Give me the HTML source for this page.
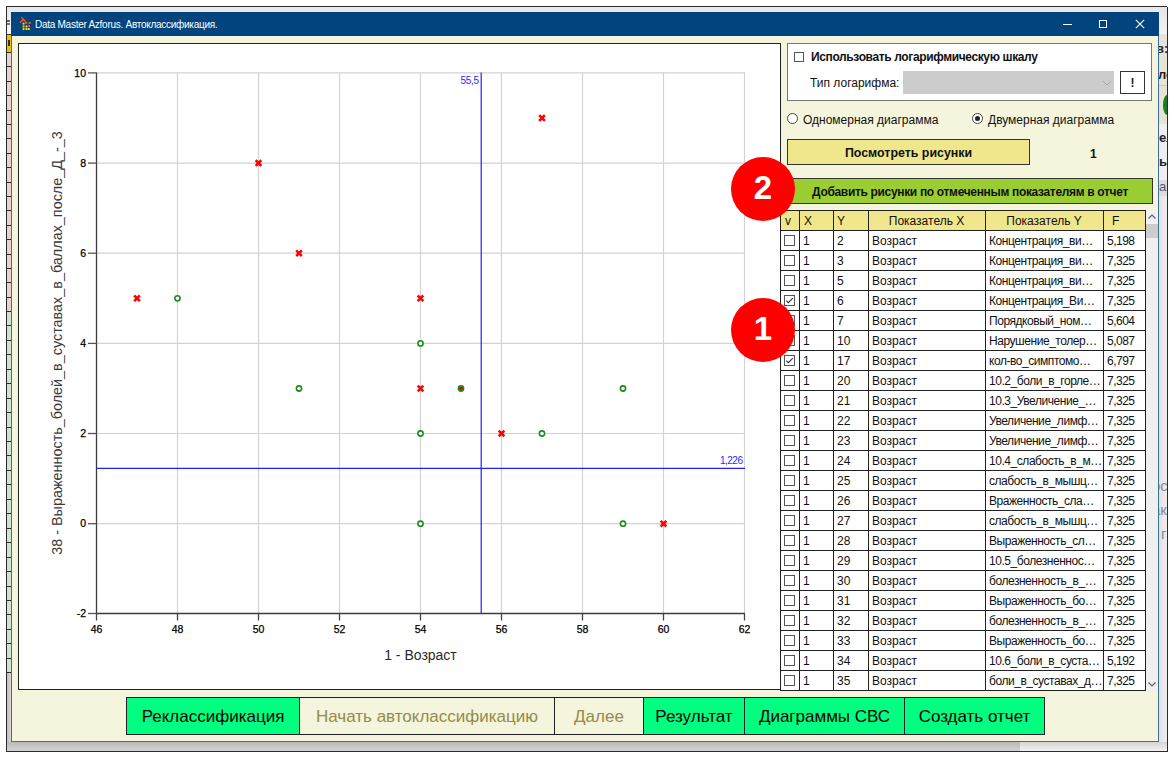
<!DOCTYPE html>
<html><head><meta charset="utf-8">
<style>
*{box-sizing:border-box;margin:0;padding:0}
html,body{width:1175px;height:757px;overflow:hidden;background:#fff;font-family:"Liberation Sans",sans-serif;color:#000}
.a{position:absolute}
#frame{left:6px;top:6px;width:1162px;height:746px;border:1px solid #2b2b2b;background:#e9e9e9}
#win{left:11px;top:12px;width:1148px;height:730px;background:#f5f4dc;border:1px solid #3a6ea5;border-top:none}
#title{left:11px;top:12px;width:1148px;height:24px;background:#02447e}
#ttext{left:35px;top:19px;font-size:10px;color:#fff;letter-spacing:-0.27px;white-space:nowrap}
#chart{left:18px;top:43px;width:763px;height:647px;border:1px solid #222;background:#fff}
.btn{position:absolute;top:697px;height:38px;border:1px solid #222;font-size:17px;text-align:center;line-height:38px;white-space:nowrap}
.g{background:#00ff80}
.d{background:#f5f4dc;color:#948b4a}

.hl{left:780px;width:366px;height:1px;background:#202020}
.vl{top:210px;width:1px;height:481px;background:#202020}
.tc{font-size:12px;line-height:14px;white-space:nowrap;color:#111}
.ty{letter-spacing:-0.45px;width:113px;overflow:hidden}
.tf{letter-spacing:-0.5px}
.cb{width:11px;height:11px;border:1px solid #555;background:#fff}
#grp{left:787px;top:43px;width:365px;height:58px;background:#fff;border:1px solid #777}
.rb{width:11px;height:11px;border:1px solid #444;border-radius:50%;background:#fff}
.bs{font-size:13px;font-weight:bold;color:#222;white-space:nowrap;width:9px;overflow:hidden;line-height:15px;padding-left:1px}
.circ{width:64px;height:64px;border-radius:50%;background:#ff0000;color:#fff;font-weight:bold;font-size:33px;text-align:center;line-height:61px}
</style></head><body>
<div id="frame" class="a"></div>

<!-- left behind strip -->
<div class="a" style="left:7px;top:7px;width:4px;height:27px;background:linear-gradient(#e6e6e6,#f6f6f6)"></div>
<div class="a" style="left:7px;top:34px;width:4px;height:18px;background:#e8c400;border-top:1px solid #333"></div>
<div class="a" style="left:8px;top:40px;width:2px;height:6px;background:#3a3200"></div>
<div class="a" style="left:7px;top:52px;width:4px;height:259px;background:repeating-linear-gradient(#2a2a2a 0 1px,#e6d2d4 1px 14.4px)"></div>
<div class="a" style="left:7px;top:311px;width:4px;height:362px;background:repeating-linear-gradient(#2a2a2a 0 1px,#cfe3d3 1px 14.45px)"></div>
<div class="a" style="left:7px;top:673px;width:4px;height:78px;background:linear-gradient(90deg,#bdbdbd,#d9d9d9)"></div>
<div class="a" style="left:7px;top:20px;width:3px;height:2px;background:#666"></div><div class="a" style="left:7px;top:23px;width:3px;height:2px;background:#777"></div>
<!-- right behind strip -->
<div class="a" style="left:1159px;top:7px;width:8px;height:27px;background:linear-gradient(#e6e6e6,#f2f2f2)"></div>
<div class="a" style="left:1159px;top:34px;width:8px;height:91px;background:#e6e4d4"></div>
<div class="a" style="left:1159px;top:85px;width:8px;height:1px;background:#c8c8c8"></div>
<div class="a" style="left:1163px;top:95px;width:4px;height:20px;border-radius:4px 0 0 4px/10px 0 0 10px;background:#1e7a2a"></div>
<div class="a" style="left:1159px;top:124px;width:8px;height:56px;background:#efefef"></div>
<div class="a" style="left:1159px;top:180px;width:8px;height:16px;background:#dcdcdc"></div>
<div class="a" style="left:1159px;top:196px;width:8px;height:546px;background:linear-gradient(90deg,#e2e2e2,#eeeeee)"></div>
<div class="a" style="left:1020px;top:742px;width:147px;height:9px;background:linear-gradient(#d4d4d4,#f2f2f2)"></div>
<div class="a" style="left:7px;top:742px;width:1013px;height:9px;background:linear-gradient(#bababa,#d2d2d2)"></div>
<div class="a" style="left:1167px;top:6px;width:8px;height:1px;background:#fff"></div>
<div class="a bs" style="left:1155px;top:41px;width:12px">в:</div>
<div class="a bs" style="left:1157px;top:67px;width:10px">лс</div>
<div class="a bs" style="left:1158px;top:130px">ел</div>
<div class="a bs" style="left:1158px;top:154px">ы</div>
<div class="a bs" style="left:1158px;top:179px;font-weight:normal;color:#505a78">ам</div>
<div class="a bs" style="left:1151px;top:478px;font-weight:normal;color:#8a8a8a;font-size:15px;width:16px">ос</div>
<div class="a bs" style="left:1151px;top:502px;font-weight:normal;color:#8a8a8a;font-size:15px;width:16px">ак</div>
<div class="a bs" style="left:1160px;top:526px;font-weight:normal;color:#8a8a8a;font-size:15px;width:7px">г</div>
<div class="a" style="left:1159px;top:12px;width:8px;height:730px;overflow:hidden"></div>
<div id="win" class="a"></div>
<div id="title" class="a"></div>

<svg class="a" style="left:15px;top:13px" width="20" height="20" viewBox="0 0 20 20">
<path d="M5.3 9.2L8.5 6.2L11.3 10M8.5 6.2L6.5 4.5" fill="none" stroke="#ff5010" stroke-width="1.3" stroke-linecap="round"/>
<g fill="#ffe000"><rect x="7.6" y="9.7" width="1.9" height="1.9"/><rect x="7.6" y="12.5" width="1.9" height="1.9"/><rect x="10.5" y="12.5" width="1.9" height="1.9"/><rect x="7.6" y="15.1" width="1.9" height="1.9"/><rect x="10.5" y="15.1" width="1.9" height="1.9"/><rect x="12.9" y="15.1" width="1.9" height="1.9"/></g>
<g fill="#ff5010"><rect x="10.3" y="9" width="2" height="2"/><rect x="13.7" y="9" width="2" height="2"/><rect x="13" y="12" width="2" height="2"/></g>
</svg>
<div class="a" style="left:1063px;top:24px;width:9px;height:1px;background:#fff"></div>
<div class="a" style="left:1099px;top:20px;width:8px;height:8px;border:1px solid #fff"></div>
<svg class="a" style="left:1135px;top:19px" width="10" height="10" viewBox="0 0 10 10"><path d="M0.8 0.8L9.2 9.2M9.2 0.8L0.8 9.2" stroke="#fff" stroke-width="1.1"/></svg>
<div id="ttext" class="a">Data Master Azforus. Автоклассификация.</div>
<div id="chart" class="a"></div>
<svg class="a" style="left:19px;top:44px" width="761" height="646" viewBox="19 44 761 646">
<line x1="177.5" y1="72.5" x2="177.5" y2="613" stroke="#d2d2d2" stroke-width="1.2"/>
<line x1="258.5" y1="72.5" x2="258.5" y2="613" stroke="#d2d2d2" stroke-width="1.2"/>
<line x1="339.5" y1="72.5" x2="339.5" y2="613" stroke="#d2d2d2" stroke-width="1.2"/>
<line x1="420.5" y1="72.5" x2="420.5" y2="613" stroke="#d2d2d2" stroke-width="1.2"/>
<line x1="501.5" y1="72.5" x2="501.5" y2="613" stroke="#d2d2d2" stroke-width="1.2"/>
<line x1="582.5" y1="72.5" x2="582.5" y2="613" stroke="#d2d2d2" stroke-width="1.2"/>
<line x1="663.5" y1="72.5" x2="663.5" y2="613" stroke="#d2d2d2" stroke-width="1.2"/>
<line x1="744.5" y1="72.5" x2="744.5" y2="613" stroke="#d2d2d2" stroke-width="1.2"/>
<line x1="97" y1="523.7" x2="745" y2="523.7" stroke="#d2d2d2" stroke-width="1.2"/>
<line x1="97" y1="433.5" x2="745" y2="433.5" stroke="#d2d2d2" stroke-width="1.2"/>
<line x1="97" y1="343.4" x2="745" y2="343.4" stroke="#d2d2d2" stroke-width="1.2"/>
<line x1="97" y1="253.2" x2="745" y2="253.2" stroke="#d2d2d2" stroke-width="1.2"/>
<line x1="97" y1="163.1" x2="745" y2="163.1" stroke="#d2d2d2" stroke-width="1.2"/>
<line x1="97" y1="72.9" x2="745" y2="72.9" stroke="#d2d2d2" stroke-width="1.2"/>
<line x1="96.5" y1="72.5" x2="96.5" y2="614" stroke="#3c3c3c" stroke-width="1.3"/>
<line x1="96" y1="613.5" x2="745" y2="613.5" stroke="#3c3c3c" stroke-width="1.3"/>
<line x1="88" y1="613.5" x2="96.5" y2="613.5" stroke="#555" stroke-width="1.3"/>
<text x="86" y="617.1" text-anchor="end" font-size="10.5" fill="#000" stroke="#000" stroke-width="0.25">-2</text>
<line x1="88" y1="523.7" x2="96.5" y2="523.7" stroke="#555" stroke-width="1.3"/>
<text x="86" y="527.3" text-anchor="end" font-size="10.5" fill="#000" stroke="#000" stroke-width="0.25">0</text>
<line x1="88" y1="433.5" x2="96.5" y2="433.5" stroke="#555" stroke-width="1.3"/>
<text x="86" y="437.1" text-anchor="end" font-size="10.5" fill="#000" stroke="#000" stroke-width="0.25">2</text>
<line x1="88" y1="343.4" x2="96.5" y2="343.4" stroke="#555" stroke-width="1.3"/>
<text x="86" y="347.0" text-anchor="end" font-size="10.5" fill="#000" stroke="#000" stroke-width="0.25">4</text>
<line x1="88" y1="253.2" x2="96.5" y2="253.2" stroke="#555" stroke-width="1.3"/>
<text x="86" y="256.8" text-anchor="end" font-size="10.5" fill="#000" stroke="#000" stroke-width="0.25">6</text>
<line x1="88" y1="163.1" x2="96.5" y2="163.1" stroke="#555" stroke-width="1.3"/>
<text x="86" y="166.7" text-anchor="end" font-size="10.5" fill="#000" stroke="#000" stroke-width="0.25">8</text>
<line x1="88" y1="72.9" x2="96.5" y2="72.9" stroke="#555" stroke-width="1.3"/>
<text x="86" y="76.5" text-anchor="end" font-size="10.5" fill="#000" stroke="#000" stroke-width="0.25">10</text>
<line x1="96.5" y1="613.5" x2="96.5" y2="620.5" stroke="#444" stroke-width="1.3"/>
<text x="96.5" y="633" text-anchor="middle" font-size="10.5" fill="#000" stroke="#000" stroke-width="0.25">46</text>
<line x1="177.5" y1="613.5" x2="177.5" y2="620.5" stroke="#444" stroke-width="1.3"/>
<text x="177.5" y="633" text-anchor="middle" font-size="10.5" fill="#000" stroke="#000" stroke-width="0.25">48</text>
<line x1="258.5" y1="613.5" x2="258.5" y2="620.5" stroke="#444" stroke-width="1.3"/>
<text x="258.5" y="633" text-anchor="middle" font-size="10.5" fill="#000" stroke="#000" stroke-width="0.25">50</text>
<line x1="339.5" y1="613.5" x2="339.5" y2="620.5" stroke="#444" stroke-width="1.3"/>
<text x="339.5" y="633" text-anchor="middle" font-size="10.5" fill="#000" stroke="#000" stroke-width="0.25">52</text>
<line x1="420.5" y1="613.5" x2="420.5" y2="620.5" stroke="#444" stroke-width="1.3"/>
<text x="420.5" y="633" text-anchor="middle" font-size="10.5" fill="#000" stroke="#000" stroke-width="0.25">54</text>
<line x1="501.5" y1="613.5" x2="501.5" y2="620.5" stroke="#444" stroke-width="1.3"/>
<text x="501.5" y="633" text-anchor="middle" font-size="10.5" fill="#000" stroke="#000" stroke-width="0.25">56</text>
<line x1="582.5" y1="613.5" x2="582.5" y2="620.5" stroke="#444" stroke-width="1.3"/>
<text x="582.5" y="633" text-anchor="middle" font-size="10.5" fill="#000" stroke="#000" stroke-width="0.25">58</text>
<line x1="663.5" y1="613.5" x2="663.5" y2="620.5" stroke="#444" stroke-width="1.3"/>
<text x="663.5" y="633" text-anchor="middle" font-size="10.5" fill="#000" stroke="#000" stroke-width="0.25">60</text>
<line x1="744.5" y1="613.5" x2="744.5" y2="620.5" stroke="#444" stroke-width="1.3"/>
<text x="744.5" y="633" text-anchor="middle" font-size="10.5" fill="#000" stroke="#000" stroke-width="0.25">62</text>
<line x1="481.2" y1="72.5" x2="481.2" y2="613" stroke="#2020ff" stroke-width="1.2"/>
<line x1="97" y1="468.4" x2="745" y2="468.4" stroke="#2020ff" stroke-width="1.2"/>
<text x="478.8" y="84.3" text-anchor="end" font-size="10" fill="#2a2aff" letter-spacing="-0.3">55,5</text>
<text x="742.5" y="463.5" text-anchor="end" font-size="10" fill="#2a2aff" letter-spacing="-0.5">1,226</text>
<text x="420.5" y="660" text-anchor="middle" font-size="14" fill="#2a2a2a">1 - Возраст</text>
<text transform="translate(61.5,343) rotate(-90)" text-anchor="middle" font-size="14.4" fill="#3a3a3a">38 - Выраженность_болей_в_суставах_в_баллах_после_Д_-_3</text>
<circle cx="177.5" cy="298.3" r="2.6" fill="#fff" stroke="#1e8c1e" stroke-width="1.6"/>
<circle cx="299.0" cy="388.5" r="2.6" fill="#fff" stroke="#1e8c1e" stroke-width="1.6"/>
<circle cx="420.5" cy="343.4" r="2.6" fill="#fff" stroke="#1e8c1e" stroke-width="1.6"/>
<circle cx="420.5" cy="433.5" r="2.6" fill="#fff" stroke="#1e8c1e" stroke-width="1.6"/>
<circle cx="420.5" cy="523.7" r="2.6" fill="#fff" stroke="#1e8c1e" stroke-width="1.6"/>
<circle cx="542.0" cy="433.5" r="2.6" fill="#fff" stroke="#1e8c1e" stroke-width="1.6"/>
<circle cx="623.0" cy="388.5" r="2.6" fill="#fff" stroke="#1e8c1e" stroke-width="1.6"/>
<circle cx="623.0" cy="523.7" r="2.6" fill="#fff" stroke="#1e8c1e" stroke-width="1.6"/>
<circle cx="461.0" cy="388.5" r="2.6" fill="#f00" stroke="#1e8c1e" stroke-width="1.6"/>
<path d="M135.1 296.4L138.9 300.2M138.9 296.4L135.1 300.2" stroke="#f00" stroke-width="2.6" stroke-linecap="square"/>
<path d="M256.6 161.2L260.4 165.0M260.4 161.2L256.6 165.0" stroke="#f00" stroke-width="2.6" stroke-linecap="square"/>
<path d="M297.1 251.3L300.9 255.1M300.9 251.3L297.1 255.1" stroke="#f00" stroke-width="2.6" stroke-linecap="square"/>
<path d="M418.6 296.4L422.4 300.2M422.4 296.4L418.6 300.2" stroke="#f00" stroke-width="2.6" stroke-linecap="square"/>
<path d="M418.6 386.6L422.4 390.4M422.4 386.6L418.6 390.4" stroke="#f00" stroke-width="2.6" stroke-linecap="square"/>
<path d="M499.6 431.6L503.4 435.4M503.4 431.6L499.6 435.4" stroke="#f00" stroke-width="2.6" stroke-linecap="square"/>
<path d="M540.1 116.1L543.9 119.9M543.9 116.1L540.1 119.9" stroke="#f00" stroke-width="2.6" stroke-linecap="square"/>
<path d="M661.6 521.8L665.4 525.6M665.4 521.8L661.6 525.6" stroke="#f00" stroke-width="2.6" stroke-linecap="square"/>
</svg>
<div id="grp" class="a"></div>
<div class="a cb" style="left:794px;top:52px;width:10px;height:10px;border-color:#555"></div>
<div class="a" style="left:811px;top:50px;font-size:12px;font-weight:bold;letter-spacing:-0.37px;white-space:nowrap;color:#111">Использовать логарифмическую шкалу</div>
<div class="a" style="left:810px;top:76px;font-size:12px;white-space:nowrap;color:#111">Тип логарифма:</div>
<div class="a" style="left:903px;top:71px;width:211px;height:23px;background:#cccccc"></div>
<svg class="a" style="left:1102px;top:79px" width="10" height="8" viewBox="0 0 10 8"><path d="M1 2L5 6L9 2" fill="none" stroke="#a8a8a8" stroke-width="1"/></svg>
<div class="a" style="left:1120px;top:71px;width:25px;height:23px;border:1px solid #333;background:#fff;font-size:12px;font-weight:bold;text-align:center;line-height:23px;color:#222">!</div>
<div class="a rb" style="left:787px;top:113px"></div>
<div class="a" style="left:803px;top:113px;font-size:12px;white-space:nowrap;color:#111">Одномерная диаграмма</div>
<div class="a rb" style="left:972px;top:113px"></div>
<div class="a" style="left:975px;top:116px;width:5px;height:5px;border-radius:50%;background:#222"></div>
<div class="a" style="left:988px;top:113px;font-size:12px;white-space:nowrap;color:#111">Двумерная диаграмма</div>
<div class="a" style="left:787px;top:139px;width:243px;height:26px;background:#f0e68c;border:1px solid #333;font-size:12.4px;font-weight:bold;text-align:center;line-height:27px;color:#111">Посмотреть рисунки</div>
<div class="a" style="left:1090px;top:147px;font-size:12px;font-weight:bold;color:#111">1</div>
<div class="a" style="left:787px;top:178px;width:366px;height:26px;background:#9acd32;border:1px solid #333;font-size:12px;font-weight:bold;letter-spacing:-0.33px;text-align:center;line-height:26px;color:#111;white-space:nowrap">Добавить рисунки по отмеченным показателям в отчет</div>
<div class="a" style="left:780px;top:210px;width:366px;height:20px;background:#f0e68c"></div>
<div class="a" style="left:780px;top:230px;width:366px;height:461px;background:#fff"></div>
<div class="a hl" style="top:210px"></div>
<div class="a hl" style="top:230px"></div>
<div class="a hl" style="top:250px"></div>
<div class="a hl" style="top:270px"></div>
<div class="a hl" style="top:290px"></div>
<div class="a hl" style="top:310px"></div>
<div class="a hl" style="top:330px"></div>
<div class="a hl" style="top:350px"></div>
<div class="a hl" style="top:370px"></div>
<div class="a hl" style="top:390px"></div>
<div class="a hl" style="top:410px"></div>
<div class="a hl" style="top:430px"></div>
<div class="a hl" style="top:450px"></div>
<div class="a hl" style="top:470px"></div>
<div class="a hl" style="top:490px"></div>
<div class="a hl" style="top:510px"></div>
<div class="a hl" style="top:530px"></div>
<div class="a hl" style="top:550px"></div>
<div class="a hl" style="top:570px"></div>
<div class="a hl" style="top:590px"></div>
<div class="a hl" style="top:610px"></div>
<div class="a hl" style="top:630px"></div>
<div class="a hl" style="top:650px"></div>
<div class="a hl" style="top:670px"></div>
<div class="a hl" style="top:690px"></div>
<div class="a vl" style="left:780px"></div>
<div class="a vl" style="left:799px"></div>
<div class="a vl" style="left:833px"></div>
<div class="a vl" style="left:868px"></div>
<div class="a vl" style="left:985px"></div>
<div class="a vl" style="left:1103px"></div>
<div class="a vl" style="left:1145px"></div>
<div class="a tc" style="left:785px;top:214px">v</div>
<div class="a tc" style="left:804px;top:214px">X</div>
<div class="a tc" style="left:837px;top:214px">Y</div>
<div class="a tc" style="left:868px;top:214px;width:117px;text-align:center">Показатель X</div>
<div class="a tc" style="left:985px;top:214px;width:118px;text-align:center">Показатель Y</div>
<div class="a tc" style="left:1112px;top:214px">F</div>
<div class="a cb" style="left:784px;top:235px"></div>
<div class="a tc" style="left:803px;top:234px">1</div>
<div class="a tc" style="left:837px;top:234px">2</div>
<div class="a tc" style="left:872px;top:234px">Возраст</div>
<div class="a tc ty" style="left:989px;top:234px">Концентрация_ви…</div>
<div class="a tc tf" style="left:1107px;top:234px">5,198</div>
<div class="a cb" style="left:784px;top:255px"></div>
<div class="a tc" style="left:803px;top:254px">1</div>
<div class="a tc" style="left:837px;top:254px">3</div>
<div class="a tc" style="left:872px;top:254px">Возраст</div>
<div class="a tc ty" style="left:989px;top:254px">Концентрация_ви…</div>
<div class="a tc tf" style="left:1107px;top:254px">7,325</div>
<div class="a cb" style="left:784px;top:275px"></div>
<div class="a tc" style="left:803px;top:274px">1</div>
<div class="a tc" style="left:837px;top:274px">5</div>
<div class="a tc" style="left:872px;top:274px">Возраст</div>
<div class="a tc ty" style="left:989px;top:274px">Концентрация_ви…</div>
<div class="a tc tf" style="left:1107px;top:274px">7,325</div>
<div class="a cb" style="left:784px;top:295px"></div>
<svg class="a" style="left:784px;top:295px" width="11" height="11" viewBox="0 0 11 11"><path d="M2.3 5.6L4.4 7.7L8.8 3.1" fill="none" stroke="#333" stroke-width="1.1"/></svg>
<div class="a tc" style="left:803px;top:294px">1</div>
<div class="a tc" style="left:837px;top:294px">6</div>
<div class="a tc" style="left:872px;top:294px">Возраст</div>
<div class="a tc ty" style="left:989px;top:294px">Концентрация_Ви…</div>
<div class="a tc tf" style="left:1107px;top:294px">7,325</div>
<div class="a cb" style="left:784px;top:315px"></div>
<div class="a tc" style="left:803px;top:314px">1</div>
<div class="a tc" style="left:837px;top:314px">7</div>
<div class="a tc" style="left:872px;top:314px">Возраст</div>
<div class="a tc ty" style="left:989px;top:314px">Порядковый_ном…</div>
<div class="a tc tf" style="left:1107px;top:314px">5,604</div>
<div class="a cb" style="left:784px;top:335px"></div>
<div class="a tc" style="left:803px;top:334px">1</div>
<div class="a tc" style="left:837px;top:334px">10</div>
<div class="a tc" style="left:872px;top:334px">Возраст</div>
<div class="a tc ty" style="left:989px;top:334px">Нарушение_толер…</div>
<div class="a tc tf" style="left:1107px;top:334px">5,087</div>
<div class="a cb" style="left:784px;top:355px"></div>
<svg class="a" style="left:784px;top:355px" width="11" height="11" viewBox="0 0 11 11"><path d="M2.3 5.6L4.4 7.7L8.8 3.1" fill="none" stroke="#333" stroke-width="1.1"/></svg>
<div class="a tc" style="left:803px;top:354px">1</div>
<div class="a tc" style="left:837px;top:354px">17</div>
<div class="a tc" style="left:872px;top:354px">Возраст</div>
<div class="a tc ty" style="left:989px;top:354px">кол-во_симптомо…</div>
<div class="a tc tf" style="left:1107px;top:354px">6,797</div>
<div class="a cb" style="left:784px;top:375px"></div>
<div class="a tc" style="left:803px;top:374px">1</div>
<div class="a tc" style="left:837px;top:374px">20</div>
<div class="a tc" style="left:872px;top:374px">Возраст</div>
<div class="a tc ty" style="left:989px;top:374px">10.2_боли_в_горле…</div>
<div class="a tc tf" style="left:1107px;top:374px">7,325</div>
<div class="a cb" style="left:784px;top:395px"></div>
<div class="a tc" style="left:803px;top:394px">1</div>
<div class="a tc" style="left:837px;top:394px">21</div>
<div class="a tc" style="left:872px;top:394px">Возраст</div>
<div class="a tc ty" style="left:989px;top:394px">10.3_Увеличение_…</div>
<div class="a tc tf" style="left:1107px;top:394px">7,325</div>
<div class="a cb" style="left:784px;top:415px"></div>
<div class="a tc" style="left:803px;top:414px">1</div>
<div class="a tc" style="left:837px;top:414px">22</div>
<div class="a tc" style="left:872px;top:414px">Возраст</div>
<div class="a tc ty" style="left:989px;top:414px">Увеличение_лимф…</div>
<div class="a tc tf" style="left:1107px;top:414px">7,325</div>
<div class="a cb" style="left:784px;top:435px"></div>
<div class="a tc" style="left:803px;top:434px">1</div>
<div class="a tc" style="left:837px;top:434px">23</div>
<div class="a tc" style="left:872px;top:434px">Возраст</div>
<div class="a tc ty" style="left:989px;top:434px">Увеличение_лимф…</div>
<div class="a tc tf" style="left:1107px;top:434px">7,325</div>
<div class="a cb" style="left:784px;top:455px"></div>
<div class="a tc" style="left:803px;top:454px">1</div>
<div class="a tc" style="left:837px;top:454px">24</div>
<div class="a tc" style="left:872px;top:454px">Возраст</div>
<div class="a tc ty" style="left:989px;top:454px">10.4_слабость_в_м…</div>
<div class="a tc tf" style="left:1107px;top:454px">7,325</div>
<div class="a cb" style="left:784px;top:475px"></div>
<div class="a tc" style="left:803px;top:474px">1</div>
<div class="a tc" style="left:837px;top:474px">25</div>
<div class="a tc" style="left:872px;top:474px">Возраст</div>
<div class="a tc ty" style="left:989px;top:474px">слабость_в_мышц…</div>
<div class="a tc tf" style="left:1107px;top:474px">7,325</div>
<div class="a cb" style="left:784px;top:495px"></div>
<div class="a tc" style="left:803px;top:494px">1</div>
<div class="a tc" style="left:837px;top:494px">26</div>
<div class="a tc" style="left:872px;top:494px">Возраст</div>
<div class="a tc ty" style="left:989px;top:494px">Враженность_сла…</div>
<div class="a tc tf" style="left:1107px;top:494px">7,325</div>
<div class="a cb" style="left:784px;top:515px"></div>
<div class="a tc" style="left:803px;top:514px">1</div>
<div class="a tc" style="left:837px;top:514px">27</div>
<div class="a tc" style="left:872px;top:514px">Возраст</div>
<div class="a tc ty" style="left:989px;top:514px">слабость_в_мышц…</div>
<div class="a tc tf" style="left:1107px;top:514px">7,325</div>
<div class="a cb" style="left:784px;top:535px"></div>
<div class="a tc" style="left:803px;top:534px">1</div>
<div class="a tc" style="left:837px;top:534px">28</div>
<div class="a tc" style="left:872px;top:534px">Возраст</div>
<div class="a tc ty" style="left:989px;top:534px">Выраженность_сл…</div>
<div class="a tc tf" style="left:1107px;top:534px">7,325</div>
<div class="a cb" style="left:784px;top:555px"></div>
<div class="a tc" style="left:803px;top:554px">1</div>
<div class="a tc" style="left:837px;top:554px">29</div>
<div class="a tc" style="left:872px;top:554px">Возраст</div>
<div class="a tc ty" style="left:989px;top:554px">10.5_болезненнос…</div>
<div class="a tc tf" style="left:1107px;top:554px">7,325</div>
<div class="a cb" style="left:784px;top:575px"></div>
<div class="a tc" style="left:803px;top:574px">1</div>
<div class="a tc" style="left:837px;top:574px">30</div>
<div class="a tc" style="left:872px;top:574px">Возраст</div>
<div class="a tc ty" style="left:989px;top:574px">болезненность_в_…</div>
<div class="a tc tf" style="left:1107px;top:574px">7,325</div>
<div class="a cb" style="left:784px;top:595px"></div>
<div class="a tc" style="left:803px;top:594px">1</div>
<div class="a tc" style="left:837px;top:594px">31</div>
<div class="a tc" style="left:872px;top:594px">Возраст</div>
<div class="a tc ty" style="left:989px;top:594px">Выраженность_бо…</div>
<div class="a tc tf" style="left:1107px;top:594px">7,325</div>
<div class="a cb" style="left:784px;top:615px"></div>
<div class="a tc" style="left:803px;top:614px">1</div>
<div class="a tc" style="left:837px;top:614px">32</div>
<div class="a tc" style="left:872px;top:614px">Возраст</div>
<div class="a tc ty" style="left:989px;top:614px">болезненность_в_…</div>
<div class="a tc tf" style="left:1107px;top:614px">7,325</div>
<div class="a cb" style="left:784px;top:635px"></div>
<div class="a tc" style="left:803px;top:634px">1</div>
<div class="a tc" style="left:837px;top:634px">33</div>
<div class="a tc" style="left:872px;top:634px">Возраст</div>
<div class="a tc ty" style="left:989px;top:634px">Выраженность_бо…</div>
<div class="a tc tf" style="left:1107px;top:634px">7,325</div>
<div class="a cb" style="left:784px;top:655px"></div>
<div class="a tc" style="left:803px;top:654px">1</div>
<div class="a tc" style="left:837px;top:654px">34</div>
<div class="a tc" style="left:872px;top:654px">Возраст</div>
<div class="a tc ty" style="left:989px;top:654px">10.6_боли_в_суста…</div>
<div class="a tc tf" style="left:1107px;top:654px">5,192</div>
<div class="a cb" style="left:784px;top:675px"></div>
<div class="a tc" style="left:803px;top:674px">1</div>
<div class="a tc" style="left:837px;top:674px">35</div>
<div class="a tc" style="left:872px;top:674px">Возраст</div>
<div class="a tc ty" style="left:989px;top:674px">боли_в_суставах_д…</div>
<div class="a tc tf" style="left:1107px;top:674px">7,325</div>
<div class="a" style="left:1146px;top:210px;width:12px;height:481px;background:#f0f0f0"></div>
<div class="a" style="left:1146px;top:224px;width:12px;height:14px;background:#cdcdcd"></div>
<svg class="a" style="left:1147px;top:213px" width="10" height="8" viewBox="0 0 10 8"><path d="M1.5 5.5L5 2L8.5 5.5" fill="none" stroke="#606060" stroke-width="1.2"/></svg>
<svg class="a" style="left:1147px;top:680px" width="10" height="8" viewBox="0 0 10 8"><path d="M1.5 2.5L5 6L8.5 2.5" fill="none" stroke="#606060" stroke-width="1.2"/></svg>
<div class="a circ" style="left:731px;top:157px">2</div>
<div class="a circ" style="left:731px;top:298px">1</div>



<div class="btn g" style="left:126px;width:174px">Реклассификация</div>
<div class="btn d" style="left:299px;width:256px">Начать автоклассификацию</div>
<div class="btn d" style="left:554px;width:90px">Далее</div>
<div class="btn g" style="left:643px;width:102px">Результат</div>
<div class="btn g" style="left:744px;width:161px">Диаграммы СВС</div>
<div class="btn g" style="left:904px;width:141px">Создать отчет</div>
</body></html>
